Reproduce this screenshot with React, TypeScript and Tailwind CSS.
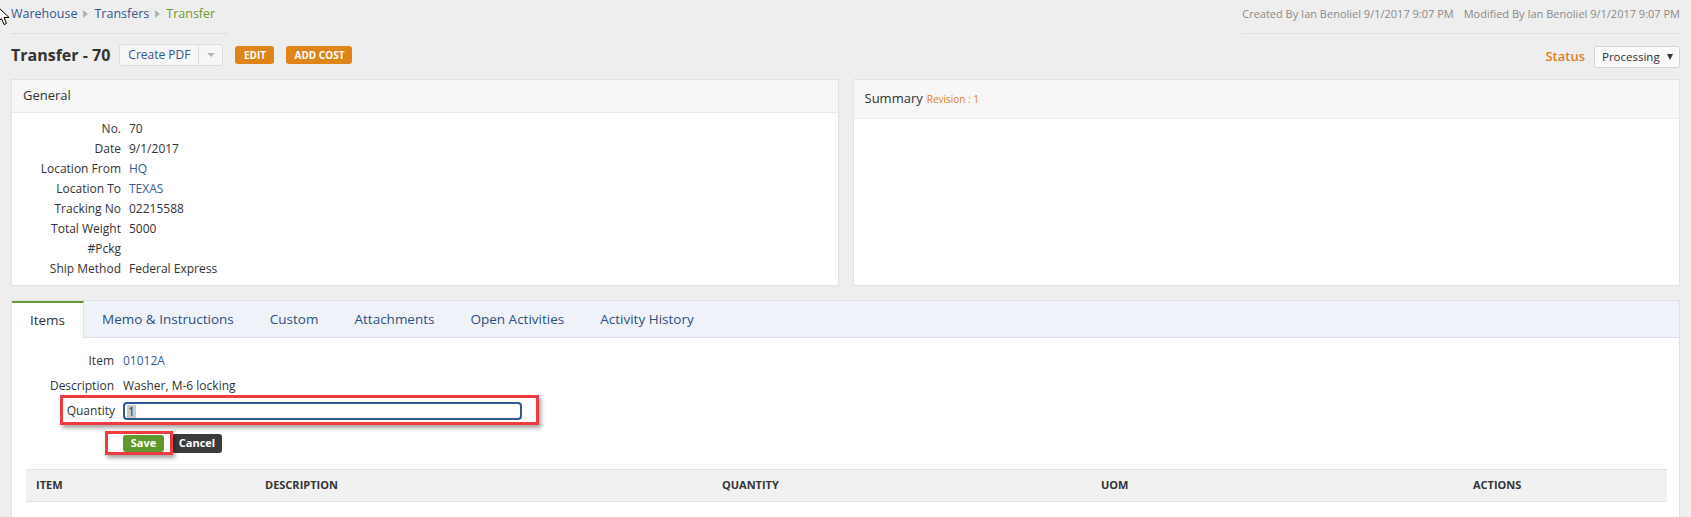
import React from "react";

const Tri = () => (
  <svg width="5" height="8" viewBox="0 0 5 8" className="mx-[6px] inline-block">
    <path d="M0 0 L5 4 L0 8 Z" fill="#b3b3b3" />
  </svg>
);

const InfoRow = ({ label, value, link }: { label: string; value?: string; link?: boolean }) => (
  <div className="flex h-[20px] items-center text-[12px]">
    <div className="w-[109px] text-right text-[#333]">{label}</div>
    <div className={"ml-[8px] " + (link ? "text-[#3a5a98]" : "text-[#333]")}>{value}</div>
  </div>
);

export default function App() {
  const tabs = ["Memo & Instructions", "Custom", "Attachments", "Open Activities", "Activity History"];
  return (
    <div className="relative min-h-[517px] bg-[#eeeeee] font-['Open_Sans',sans-serif] text-[#333]">
      {/* cursor */}
      <svg className="absolute left-[-3px] top-[6px]" width="14" height="20" viewBox="0 0 14 20">
        <path d="M1 1 L1 16 L4.5 12.5 L7 18.5 L9.5 17.5 L7 11.5 L12 11.5 Z" fill="#fff" stroke="#000" strokeWidth="1" strokeLinejoin="round" />
      </svg>
      <div className="px-[11px]">
        {/* top row */}
        <div className="flex h-[34px] items-start justify-between">
          <div className="flex h-[34px] w-[217px] items-start border-b border-[#dedede] pt-[5px] text-[12.5px] leading-[18px]">
            <span className="text-[#34558b]">Warehouse</span>
            <span className="flex h-[18px] items-center"><Tri /></span>
            <span className="text-[#34558b]">Transfers</span>
            <span className="flex h-[18px] items-center"><Tri /></span>
            <span className="text-[#6e9a2f]">Transfer</span>
          </div>
          <div className="flex h-[34px] items-start border-b border-[#dedede] pt-[5px] text-[11px] leading-[18px] text-[#8a8a8a]">
            <span>Created By Ian Benoliel 9/1/2017 9:07 PM</span>
            <span className="ml-[10px]">Modified By Ian Benoliel 9/1/2017 9:07 PM</span>
          </div>
        </div>

        {/* title row */}
        <div className="flex h-[42px] items-center justify-between">
          <div className="flex items-center">
            <h1 className="text-[16px] font-bold leading-[20px] text-[#333]">Transfer - 70</h1>
            <div className="ml-[9px] flex h-[22px] items-stretch rounded-[3px] border border-[#dcdcdc] bg-[#f6f6f6]">
              <div className="flex items-center px-[8px] text-[12px] text-[#34558b]">Create PDF</div>
              <div className="flex w-[24px] items-center justify-center border-l border-[#dcdcdc]">
                <svg width="8" height="4" viewBox="0 0 8 4"><path d="M0 0 L8 0 L4 4 Z" fill="#b5b5b5" /></svg>
              </div>
            </div>
            <button className="ml-[12px] flex h-[18px] w-[39px] items-center justify-center rounded-[3px] bg-[#df8419] text-[10px] font-bold text-white">EDIT</button>
            <button className="ml-[12px] flex h-[18px] w-[66px] items-center justify-center rounded-[3px] bg-[#df8419] text-[10px] font-bold text-white">ADD COST</button>
          </div>
          <div className="mt-[4px] flex items-center">
            <span className="text-[13px] font-semibold text-[#e07e26]">Status</span>
            <div className="ml-[9px] flex h-[22px] w-[86px] items-center justify-between rounded-[2px] border border-[#d4d4d4] bg-[#fafafa] pl-[7px] pr-[6px] text-[11.5px] text-[#333]">
              <span>Processing</span>
              <svg width="6" height="6" viewBox="0 0 6 6"><path d="M0 0 L6 0 L3 6 Z" fill="#333" /></svg>
            </div>
          </div>
        </div>

        {/* panels */}
        <div className="mt-[3px] grid h-[207px] grid-cols-2 gap-[14px]">
          <div className="border border-[#e2e2e2] bg-white">
            <div className="flex h-[33px] items-center border-b border-[#ebebeb] bg-[#f7f7f7] px-[11px] text-[13px] text-[#333]">General</div>
            <div className="pt-[6px]">
              <InfoRow label="No." value="70" />
              <InfoRow label="Date" value="9/1/2017" />
              <InfoRow label="Location From" value="HQ" link />
              <InfoRow label="Location To" value="TEXAS" link />
              <InfoRow label="Tracking No" value="02215588" />
              <InfoRow label="Total Weight" value="5000" />
              <InfoRow label="#Pckg" value="" />
              <InfoRow label="Ship Method" value="Federal Express" />
            </div>
          </div>
          <div className="border border-[#e2e2e2] bg-white">
            <div className="flex h-[39px] items-center border-b border-[#ebebeb] bg-[#f7f7f7] px-[11px]">
              <span className="text-[13px] text-[#333]">Summary</span>
              <span className="ml-[4px] text-[10px] text-[#e07e26]">Revision : 1</span>
            </div>
          </div>
        </div>

        {/* tabs panel */}
        <div className="mt-[14px] min-h-[230px] border border-[#e2e2e2] bg-white">
          <div className="flex h-[37px] border-b border-[#dfe4ec] bg-[#eff3f9]">
            <div className="-mb-px flex w-[72px] items-center justify-center border-r border-t-2 border-r-[#dfe4ec] border-t-[#6a9a35] bg-white text-[13.5px] text-[#333]">Items</div>
            {tabs.map((t) => (
              <div key={t} className="flex items-center px-[18px] text-[13.5px] text-[#2e4f82]">{t}</div>
            ))}
          </div>
          <div className="pt-[10px]">
            <div className="flex h-[25px] items-center text-[12px]">
              <div className="w-[102px] text-right">Item</div>
              <div className="ml-[9px] text-[#3a5a98]">01012A</div>
            </div>
            <div className="flex h-[25px] items-center text-[12px]">
              <div className="w-[102px] text-right">Description</div>
              <div className="ml-[9px]">Washer, M-6 locking</div>
            </div>
            <div className="relative flex h-[26px] items-center text-[12px]">
              <div className="w-[103px] text-right">Quantity</div>
              <div className="ml-[8px] flex h-[18px] w-[399px] items-center rounded-[4px] border-2 border-[#2f5a94] bg-white pl-[2px]">
                <span className="bg-[#c9c9c9] px-[1px] leading-[13px] text-[#333]">1</span>
              </div>
              <div className="absolute left-[48px] top-[-3px] h-[30px] w-[479px] border-[3px] border-[#ee3b40] shadow-[2px_3px_4px_rgba(0,0,0,0.35)]"></div>
            </div>
            <div className="relative mt-[10px] flex h-[18px] items-center">
              <button className="ml-[111px] flex h-[17px] w-[41px] items-center justify-center rounded-[3px] bg-[#5f982d] text-[11px] font-bold text-white">Save</button>
              <button className="ml-[8px] flex h-[19px] w-[50px] items-center justify-center rounded-[3px] bg-[#3b3b3b] text-[11px] font-bold text-white">Cancel</button>
              <div className="absolute left-[93px] top-[-3px] h-[24px] w-[68px] border-[3px] border-[#ee3b40] shadow-[2px_3px_4px_rgba(0,0,0,0.35)]"></div>
            </div>
            <div className="ml-[14px] mr-[12px] mt-[17px] grid h-[33px] grid-cols-[229px_457px_379px_372px_1fr] items-center border-y border-[#e3e3e3] bg-[#f1f1f1] text-[11px] font-bold text-[#333]">
              <div className="px-[10px]">ITEM</div>
              <div className="px-[10px]">DESCRIPTION</div>
              <div className="px-[10px]">QUANTITY</div>
              <div className="px-[10px]">UOM</div>
              <div className="px-[10px]">ACTIONS</div>
            </div>
          </div>
        </div>
      </div>
    </div>
  );
}
